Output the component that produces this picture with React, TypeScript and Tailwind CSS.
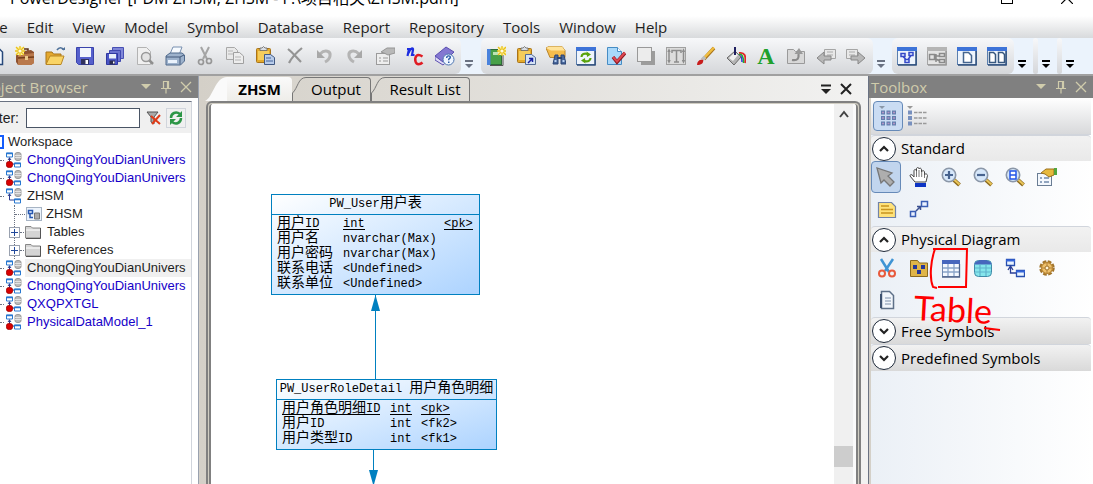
import { ReactNode } from 'react';
import clsx from 'clsx';

const menus = ['File', 'Edit', 'View', 'Model', 'Symbol', 'Database', 'Report', 'Repository', 'Tools', 'Window', 'Help'];

/* ICON PARTS */
const WindowFrame = ({ gray, children }: { gray?: boolean; children?: ReactNode }) => (
  <>
    <rect x="0.5" y="1.5" width="19" height="17" fill={gray ? '#e4e4e4' : '#eef4fc'} stroke={gray ? '#a5a5a5' : '#5b7fae'} />
    <rect x="0" y="1" width="20" height="4" fill={gray ? '#b5b5b5' : '#3d73d8'} />
    <path d="M19 5v14H1" fill="none" stroke={gray ? '#9a9a9a' : '#31507c'} strokeWidth="1.5" />
    {children}
  </>
);

const Star = ({ x, y }: { x: number; y: number }) => (
  <g transform={`translate(${x} ${y})`}>
    <rect x="-4" y="-4" width="8" height="8" fill="#fff3a0" />
    <path d="M0-5V5M-5 0H5M-4-4L4 4M4-4L-4 4" stroke="#e8c020" strokeWidth="1.3" />
    <circle r="1.6" fill="#fffbe0" />
  </g>
);

const Clipboard = () => (
  <>
    <rect x="1.5" y="2.5" width="14" height="14" rx="1" fill="#e5ab2c" stroke="#a8741a" />
    <path d="M3 5h11v9H3z" fill="#f5cd5c" />
    <path d="M5 4.5V2h2L8.500 .5 10 2h2v2.500z" fill="#d9dde3" stroke="#666" strokeWidth=".8" />
  </>
);

const Magnifier = ({ children }: { children: ReactNode }) => (
  <>
    <path d="M13 13l5.500 5" stroke="#8d6a1c" strokeWidth="4" />
    <path d="M13 12.500l5.500 5" stroke="#eac65a" strokeWidth="2" />
    <circle cx="8" cy="8" r="6.700" fill="#d6e7fa" stroke="#8b97a8" strokeWidth="1.600" />
    {children}
  </>
);

const icons: Record<string, ReactNode> = {
  New: <path d="M4 1.500h9l4.500 4.500v12.500H4z" fill="#f2f7ff" stroke="#27487a" strokeWidth="1.500" />,
  'New Project': (
    <>
      <path d="M7 5V3h6v2" fill="none" stroke="#5e3316" strokeWidth="1.500" />
      <path d="M1 6l15-2 3 2v11l-3 2H3l-2-3z" fill="#8f5230" />
      <path d="M3 9l16-2v10l-3 2H3z" fill="#b9794c" />
      <path d="M3 12l16-1" stroke="#733c18" strokeWidth="1.300" />
      <rect x="10" y="10" width="3" height="4" fill="#eac98c" />
      <Star x={5} y={5} />
    </>
  ),
  Open: (
    <>
      <path d="M1 18V6h6l1.500 2H16v3" fill="#e4a82e" stroke="#a87518" />
      <path d="M1 18.500L5 10h14l-3 8.500z" fill="#f9d466" stroke="#b98724" />
      <path d="M12 4c2-3 5-3 7 0" fill="none" stroke="#4f7199" strokeWidth="1.600" />
      <path d="M16.500 4h3.500V1z" fill="#4f7199" />
    </>
  ),
  Save: (
    <>
      <path d="M1.500 1.500h17v17h-15l-2-2z" fill="#5560cc" stroke="#3a43ac" />
      <rect x="5" y="2" width="11" height="9" fill="#f1f5fc" />
      <rect x="6" y="13" width="8" height="5.500" fill="#30325c" />
      <rect x="10.500" y="14" width="2.500" height="4" fill="#fff" />
    </>
  ),
  'Save All': (
    <>
      <path d="M7.500 1.500h11v11h-11z" fill="#8087d8" stroke="#4850b4" />
      <path d="M4.500 4.500h11v11h-11z" fill="#6a72d0" stroke="#4048b0" />
      <path d="M1.500 7.500h11v11h-11z" fill="#4a55c5" stroke="#3038a0" />
      <rect x="4" y="8" width="7" height="4.500" fill="#e8eefa" />
      <rect x="4.500" y="14.500" width="5.500" height="4" fill="#2a2c50" />
      <rect x="8" y="15.500" width="1.500" height="2" fill="#fff" />
    </>
  ),
  'Print Preview': (
    <>
      <path d="M2.500 1.500h9l4 4v13h-13z" fill="#f0f0f0" stroke="#b3b3b3" />
      <path d="M14 14l4 4" stroke="#8f8f8f" strokeWidth="2.500" />
      <circle cx="11" cy="11" r="4.500" fill="#e4e4e4" stroke="#999" strokeWidth="1.500" />
    </>
  ),
  Print: (
    <>
      <path d="M5 8l3-7h9l-3 8z" fill="#f7fbff" stroke="#7890b0" />
      <path d="M1 10l4-3h12l2.500 2v6l-4 4H1z" fill="#9db2cc" stroke="#506a8c" />
      <path d="M1 11h14l4-2M15 11v7.500" fill="none" stroke="#42597a" />
      <path d="M3 14h9v3H3z" fill="#eaf2fc" />
    </>
  ),
  Cut: (
    <>
      <path d="M6 1l6 12M14 1L8 13" stroke="#a4a4a4" strokeWidth="2" />
      <circle cx="6" cy="16" r="2.500" fill="none" stroke="#979797" strokeWidth="1.700" />
      <circle cx="14" cy="15" r="2.500" fill="none" stroke="#979797" strokeWidth="1.700" />
    </>
  ),
  Copy: (
    <>
      <path d="M1.500 1.500h8l3 3v9h-11z" fill="#e9e9e9" stroke="#a8a8a8" />
      <path d="M8.500 6.500h6l4 3.500v7.500h-10z" fill="#ededed" stroke="#a0a0a0" />
      <path d="M3 5h5M3 8h5M10 11h6M10 14h6" stroke="#b5b5b5" />
    </>
  ),
  Paste: (
    <>
      <Clipboard />
      <path d="M9.500 8.500h6l4 3v7h-10z" fill="#b8ccea" stroke="#415982" />
      <path d="M11 12h5M11 15h7" stroke="#47649a" />
    </>
  ),
  Delete: <path d="M3 3c5 4 8 8 13 13M17 2C12 6 7 11 4 17" fill="none" stroke="#949494" strokeWidth="2.200" />,
  Undo: (
    <>
      <path d="M5 8c5-5 11-3 10 2-.5 3-3 5-5 6" fill="none" stroke="#b4b4b4" strokeWidth="3" />
      <path d="M2 4v8h8z" fill="#a8a8a8" />
    </>
  ),
  Redo: (
    <>
      <path d="M14 8C9 3 3 5 4 10c.5 3 3 5 5 6" fill="none" stroke="#b4b4b4" strokeWidth="3" />
      <path d="M17 4v8H9z" fill="#a8a8a8" />
    </>
  ),
  Properties: (
    <>
      <rect x="1.500" y="7.500" width="13" height="11" fill="#eee" stroke="#9b9b9b" />
      <path d="M4 12h2m2 0h5M4 15h2m2 0h5" stroke="#999" />
      <path d="M6 6l6-4h8v5l-7 2-4-2z" fill="#b8b8b8" stroke="#959595" />
    </>
  ),
  Generate: (
    <>
      <path d="M2 3h2L2.500 10M3.500 7c2-5 5-6 4.500-3L7 9h2.500" fill="none" stroke="#1e2ee0" strokeWidth="2.200" />
      <path d="M17.500 10.500c-6-4-8 1-7 5 1 4 5 3 7 1" fill="none" stroke="#e01c24" strokeWidth="2.500" />
    </>
  ),
  Help: (
    <>
      <path d="M0 10L11 1l8 5-11 11z" fill="#8377d1" stroke="#5a4eb0" />
      <path d="M0 10v4l8 5 10-9-10 6z" fill="#ddd9f5" stroke="#5a4eb0" />
      <circle cx="13.500" cy="13.500" r="5.500" fill="#eef5ff" stroke="#4c75b0" />
      <path d="M11.700 12c0-3 4-2.500 3.600-.5-.2 1-1.700 1-1.700 2.700" fill="none" stroke="#2c5ca8" strokeWidth="1.400" />
      <rect x="13" y="15.500" width="1.500" height="1.500" fill="#2c5ca8" />
    </>
  ),
  'New Diagram': (
    <>
      <rect x="1.500" y="3.500" width="14" height="15" fill="#48a048" stroke="#2d6b38" />
      <rect x="1" y="3" width="3.500" height="16" fill="#4a82dc" />
      <rect x="7" y="6" width="6" height="3" fill="#bde3b4" />
      <path d="M17 6v13.500H4" fill="none" stroke="#555" />
      <Star x={16} y={5} />
    </>
  ),
  'Paste as Shortcut': (
    <>
      <Clipboard />
      <path d="M9.500 8.500h6l4 3v7h-10z" fill="#d5e2f5" stroke="#526b94" />
      <path d="M12 17l4-4m-3-.5h3.500V16" fill="none" stroke="#1820a0" strokeWidth="1.500" />
    </>
  ),
  Find: (
    <>
      <path d="M0 2l3-1.500h13l3 4v7H4z" fill="#f5bc4c" stroke="#b8842b" />
      <path d="M0 2l3-1.500h13l3 4H5z" fill="#ffe39a" />
      <path d="M9 9h3v9H7zM15 9h3l2 9h-5z" fill="#48679b" stroke="#2a4474" />
      <path d="M11 12h5" stroke="#2a4474" strokeWidth="2" />
      <path d="M8.500 15h2M16.500 15h2" stroke="#b8d0f0" strokeWidth="2" />
    </>
  ),
  Refresh: (
    <WindowFrame>
      <path d="M5.500 11c0-3 3-4 6-3M14.500 12c0 3-3 4-6 3" fill="none" stroke="#58a30c" strokeWidth="2.200" />
      <path d="M10.500 5.500L15 8.500l-4 2.500zM9.500 17.500L5 14.500 9 12z" fill="#58a30c" />
    </WindowFrame>
  ),
  'Check Model': (
    <>
      <path d="M1.500 1.500h10l4 4v13h-14z" fill="#a9d8fa" stroke="#468cc4" />
      <path d="M11.500 1.500v4h4" fill="#fff" stroke="#468cc4" />
      <path d="M7 11l4 5 8-9" fill="none" stroke="#8c1820" strokeWidth="3.500" />
      <path d="M7 11l4 4.500 8-9" fill="none" stroke="#dd4650" strokeWidth="2" />
    </>
  ),
  Shadow: (
    <>
      <path d="M5 5h14v14H5z" fill="#9c9c9c" />
      <rect x="1.500" y="1.500" width="14" height="14" fill="#ececec" stroke="#999" />
    </>
  ),
  'Text Format': (
    <>
      <rect x="0.500" y="1.500" width="19" height="17" fill="#dcdcdc" stroke="#a0a0a0" />
      <path d="M6 7V4.500h9V7M10.500 5v11M8 16h5M3 5v10M17.500 5v10M2 6l1-2 1 2M2 14l1 2 1-2M16.500 6l1-2 1 2M16.500 14l1 2 1-2" fill="none" stroke="#8c8c8c" strokeWidth="1.500" />
    </>
  ),
  'Line Style': (
    <>
      <path d="M18 2L8 13" stroke="#a8741c" strokeWidth="3.500" />
      <path d="M18 1.500L8 12" stroke="#f0bd40" strokeWidth="2.500" />
      <path d="M9 11L6 14" stroke="#bbb" strokeWidth="3.500" />
      <path d="M1 19c0-4 3-6 6-5 1 3-2 5-6 5z" fill="#c81c1c" />
    </>
  ),
  Fill: (
    <>
      <path d="M13 7c6-1 7 3 6 10" fill="none" stroke="#e02828" strokeWidth="1.800" />
      <path d="M13 8.500c3-1 4.500 2 4.500 8.500" fill="none" stroke="#20b030" strokeWidth="1.500" />
      <path d="M12 10c3-1 4 1 4 6" fill="none" stroke="#2838e0" strokeWidth="1.500" />
      <path d="M9 5l6 6-7 8-7-7z" fill="#b4b4b4" stroke="#6a6a6a" />
      <path d="M3 12l6-6 3 3-5 6z" fill="#efefef" />
      <path d="M9 1v8" stroke="#202060" strokeWidth="2" />
    </>
  ),
  'Up One Level': (
    <>
      <path d="M1.500 17.500v-14h6l2 2h9v12z" fill="#d8d8d8" stroke="#9a9a9a" />
      <path d="M6 14c6 1 7-2 6.500-6" fill="none" stroke="#8a8a8a" strokeWidth="2.200" />
      <path d="M8.500 8L13 2l4 6z" fill="#999" />
    </>
  ),
  Previous: (
    <>
      <path d="M8.500 3.500h11v9h-11z" fill="#e8e8e8" stroke="#a5a5a5" />
      <path d="M11 6h6M11 9h6" stroke="#aaa" />
      <path d="M1 12l7-6v4h7v4H8v4z" fill="#b8b8b8" stroke="#888" />
    </>
  ),
  Next: (
    <>
      <path d="M0.500 3.500h11v9h-11z" fill="#e8e8e8" stroke="#a5a5a5" />
      <path d="M3 6h6M3 9h6" stroke="#aaa" />
      <path d="M19 12l-7-6v4H5v4h7v4z" fill="#b8b8b8" stroke="#888" />
    </>
  ),
  'Physical Model': (
    <WindowFrame>
      <path d="M4 7.500h4v3H4zM12 6.500h4v3h-4zM8 13.500h4v3H8zM6 10.500l3 3M14 9.500l-3 4" fill="#e4ecff" stroke="#3448c8" strokeWidth="1.500" />
    </WindowFrame>
  ),
  'Auto Layout': (
    <WindowFrame gray>
      <path d="M2.500 8.500h5v5h-5zM12.500 7.500h5v3h-5zM12.500 13.500h5v3h-5zM7.500 10h5M7.500 12l5 3M9 8v8" fill="none" stroke="#8a8a8a" strokeWidth="1.500" />
    </WindowFrame>
  ),
  Page: (
    <WindowFrame>
      <path d="M6.500 6.500h5l3 3v7h-8z" fill="#fff" stroke="#45658f" strokeWidth="1.500" />
    </WindowFrame>
  ),
  'All Pages': (
    <WindowFrame>
      <path d="M2.500 6.500h4l2 2v8h-6zM11.500 6.500h4l2 2v8h-6z" fill="#fff" stroke="#38587f" strokeWidth="1.500" />
    </WindowFrame>
  ),

  /* TOOLBOX */
  'Large Icons': (
    <>
      <path d="M1 0h6L4 3z" fill="#8a97a8" />
      <path d="M3 6.500h15M3 12h15M3 17.500h15" stroke="#627fae" strokeWidth="4" strokeDasharray="4 1.500" />
      <path d="M4 6.500h13M4 12h13M4 17.500h13" stroke="#b393c4" strokeWidth="1.500" strokeDasharray="2 3.500" />
    </>
  ),
  'Small Icons': (
    <>
      <path d="M0 0h6L3 3z" fill="#999" />
      <path d="M1 6.500h4M1 12h4M1 17.500h4" stroke="#7890be" strokeWidth="4" />
      <path d="M7 6.500h13M7 12h13M7 17.500h13" stroke="#9a9a9a" strokeWidth="1.500" strokeDasharray="3.500 1" />
    </>
  ),
  Pointer: <path d="M1 1l4 15 3-3 6 6 4-4-6-6 4-3z" fill="#aeaeae" stroke="#777" strokeWidth="1.300" />,
  Grabber: (
    <>
      <path d="M6 15L1 9c0-2 2-2 4 1V4c0-2 2-2 2.500 0V2c0-2 2.500-2 2.500 0V2c.5-1.500 2.500-1 2.500 1v2c.5-2 3-1.500 3 0v3c.5-2 3-1 3 .5L17 15z" fill="#fff" stroke="#444" strokeWidth="1" />
      <path d="M7.500 4v6M10 3v7M12.700 4v6M15.500 6v5" stroke="#555" strokeWidth=".8" />
      <rect x="6" y="16" width="11" height="4" fill="#0d34c4" />
    </>
  ),
  'Zoom In': <Magnifier><path d="M4 8h8M8 4v8" stroke="#47638f" strokeWidth="2.200" /></Magnifier>,
  'Zoom Out': <Magnifier><path d="M4 8h8" stroke="#47638f" strokeWidth="2.200" /></Magnifier>,
  'Open Diagram': <Magnifier><path d="M5 4h6v8H5zM5 8h6" fill="#fff" stroke="#2455e8" strokeWidth="1.500" /></Magnifier>,
  'Object Properties': (
    <>
      <rect x="0.500" y="6.500" width="14" height="12" fill="#f4f8fd" stroke="#6a7d94" />
      <path d="M3 11h2m2 0h5M3 15h2m2 0h5" stroke="#7089aa" strokeWidth="1.500" />
      <path d="M4 6l5-4h8v6l-5 2-4-3z" fill="#e7b93c" stroke="#9b711d" />
      <path d="M17 1h3v7h-3z" fill="#52a63e" />
    </>
  ),
  Note: (
    <>
      <path d="M1.500 3.500h13l4 4v11h-17z" fill="#ffe27a" stroke="#7183a8" strokeWidth="1.200" />
      <path d="M4 7h8M4 10.500h12M4 14h12" stroke="#c9951f" strokeWidth="1.500" />
    </>
  ),
  Link: (
    <>
      <path d="M1.500 12.500h5v5h-5zM12.500 2.500h6v5h-6z" fill="#eaf1ff" stroke="#3a5eb4" strokeWidth="1.500" />
      <path d="M7 12l4-4M8 7.500h3.500V11" fill="none" stroke="#3a4f90" strokeWidth="1.500" />
    </>
  ),
  'Delete Symbol': (
    <>
      <path d="M4 1l8 13M16 1L8 13" stroke="#3f94d4" strokeWidth="2.500" />
      <circle cx="5" cy="15.500" r="3" fill="none" stroke="#e85a3c" strokeWidth="2" />
      <circle cx="15" cy="15.500" r="3" fill="none" stroke="#e85a3c" strokeWidth="2" />
    </>
  ),
  Package: (
    <>
      <path d="M1.500 18.500v-16h7l2 2.500h8v13.500z" fill="#e0b548" stroke="#8b6a20" />
      <path d="M4 7h4v4H4zM12 7h4v4h-4zM8 12h4v4H8z" fill="#26389a" />
    </>
  ),
  Table: (
    <>
      <rect x="1.500" y="2.500" width="17" height="16" fill="#f5f9ff" stroke="#7089b0" />
      <rect x="1" y="2" width="18" height="4" fill="#4767bd" />
      <path d="M7 6v12M13 6v12M2 10h16M2 14h16" stroke="#8aa5c9" strokeWidth="1.300" />
      <path d="M18.500 6v13H1" fill="none" stroke="#50648a" strokeWidth="1.300" />
    </>
  ),
  View: (
    <>
      <rect x="1.500" y="2.500" width="17" height="16" rx="4" fill="#85e6ec" stroke="#3f8ba8" />
      <path d="M1.500 6.500c0-6 17-6 17 0z" fill="#4767bd" />
      <path d="M7 6v12M13 6v12M2 10h16M2 14h16" stroke="#5fb4cc" strokeWidth="1.200" />
    </>
  ),
  Reference: (
    <>
      <path d="M1.500 1.500h8v6h-8zM11.500 12.500h8v6h-8z" fill="#eaf4ff" stroke="#284fae" strokeWidth="1.300" />
      <path d="M1 2.500h9M11 13.500h9" stroke="#3465da" strokeWidth="2" />
      <path d="M5.500 8v7H11M3 12l2.500-4L8 12" fill="none" stroke="#2a3f96" strokeWidth="1.300" />
    </>
  ),
  Procedure: (
    <>
      <circle cx="10" cy="10" r="6.500" fill="none" stroke="#a1742b" strokeWidth="2.500" strokeDasharray="3.600 1.500" />
      <circle cx="10" cy="10" r="5.500" fill="#efc16c" stroke="#b98736" strokeWidth="1.300" />
      <path d="M10 5v10M5 10h10" stroke="#b5833a" />
      <circle cx="10" cy="10" r="2" fill="#fff2d5" stroke="#a1742b" />
    </>
  ),
  File: (
    <>
      <path d="M4.500 1.500h8l4 4v13h-12z" fill="#f2f6fb" stroke="#5e7088" strokeWidth="1.500" />
      <rect x="3" y="4" width="2" height="14" fill="#3e5270" />
      <path d="M8 8h6M8 11h6M8 14h6" stroke="#7d90aa" />
    </>
  ),
};

const Icon = ({ name }: { name: string }) => (
  <svg viewBox="0 0 20 20" className="size-5 shrink-0" aria-hidden="true">
    {icons[name]}
  </svg>
);

const Overflow = ({ dark, wide }: { dark?: boolean; wide?: boolean }) => (
  <button aria-label="Toolbar options" className={clsx('flex h-full shrink-0 items-end pb-1 pl-1', wide ? 'w-5' : 'w-[19px]', dark ? 'text-black' : 'text-gray-500')}>
    <svg viewBox="0 0 8 8" className="mb-0.5 size-2" aria-hidden="true">
      <path d="M0 1h8" stroke="currentColor" strokeWidth="2" />
      <path d="M0 4h8L4 8z" fill="currentColor" />
    </svg>
  </button>
);

const ToolGroup = ({ names, className }: { names: string[]; className?: string }) => (
  <div className={clsx('flex h-full items-center rounded-md bg-linear-to-b from-[#f7f8fa] to-[#d5d7da]', className)}>
    {names.map((name) =>
      name === 'Font' ? (
        <button key={name} aria-label="Font colour" className="w-[30px] font-['Liberation_Serif',serif] text-2xl leading-5 font-bold text-[#20a02c]">
          A
        </button>
      ) : (
        <button key={name} aria-label={name} className="flex w-[30px] justify-center">
          <Icon name={name} />
        </button>
      )
    )}
  </div>
);

const PanelHeader = ({ title, className }: { title: string; className?: string }) => (
  <div className="flex h-[22px] shrink-0 items-center justify-between overflow-hidden bg-[#808080] text-[#d0ccac]">
    <h2 className={clsx('text-[15px] whitespace-nowrap', className)}>{title}</h2>
    <div className="flex items-center gap-2 pr-1.5">
      <button aria-label="Panel menu">
        <svg viewBox="0 0 12 12" className="size-3" aria-hidden="true"><path d="M1 3h10L6 8z" fill="currentColor" /></svg>
      </button>
      <button aria-label="Pin panel">
        <svg viewBox="0 0 12 14" className="h-3.5 w-3" fill="none" stroke="currentColor" strokeWidth="1.200" aria-hidden="true">
          <path d="M3.500 8V1.500h5V8M1 8.500h10M6 9v4.500M7.500 2v6" />
        </svg>
      </button>
      <button aria-label="Close panel">
        <svg viewBox="0 0 12 12" className="size-3" aria-hidden="true"><path d="M1 1l10 10M11 1L1 11" stroke="currentColor" strokeWidth="1.300" /></svg>
      </button>
    </div>
  </div>
);

/* TREE */
const ModelIcon = ({ dot }: { dot?: boolean }) => (
  <svg viewBox="0 0 16 16" className="size-4 shrink-0" aria-hidden="true">
    <path d="M9 2c0-2 6-2 6 0v5c0 2-6 2-6 0z" fill="#bcbcbc" stroke="#8a8a8a" strokeWidth=".8" />
    <path d="M9 3.500h6M9 5.500h6" stroke="#eee" strokeWidth=".8" />
    <path d="M.5 1h6v4h-6zM8.500 11h6v4h-6z" fill="#fff" stroke="#2878d0" />
    <path d="M0 1.500h7M8 11.500h7" stroke="#2878d0" strokeWidth="1.500" />
    <path d="M3.500 5.500V12H8M2 8l1.500-2L5 8" fill="none" stroke="#2c3c90" />
    {dot && <circle cx="3.500" cy="12.500" r="3.300" fill="#d80000" stroke="#900000" strokeWidth=".6" />}
  </svg>
);

const models = [
  { name: 'ChongQingYouDianUnivers', state: 'closed' },
  { name: 'ChongQingYouDianUnivers', state: 'closed' },
  { name: 'ZHSM', state: 'open' },
  { name: 'ChongQingYouDianUnivers', state: 'selected' },
  { name: 'ChongQingYouDianUnivers', state: 'closed' },
  { name: 'QXQPXTGL', state: 'closed' },
  { name: 'PhysicalDataModel_1', state: 'closed' },
];

const Folder = ({ name }: { name: string }) => (
  <li className="flex h-[18px] items-center">
    <button aria-label={`Expand ${name}`} className="-ml-1.5 flex size-[11px] shrink-0 items-center justify-center border border-gray-400 bg-white">
      <svg viewBox="0 0 7 7" className="size-[7px]" aria-hidden="true"><path d="M0 3.500h7M3.500 0v7" stroke="#234a9c" /></svg>
    </button>
    <span className="mr-px w-1 border-t border-dotted border-gray-500" />
    <svg viewBox="0 0 16 14" className="h-3.5 w-4 shrink-0" aria-hidden="true">
      <path d="M.5 13V1.500H6L7.500 3h8V13z" fill="#d4d4d4" stroke="#888" />
      <path d="M1 5h14" stroke="#fff" />
      <path d="M15.500 3v10.500H1" fill="none" stroke="#555" />
    </svg>
    <span className="ml-1.5">{name}</span>
  </li>
);

const ObjectBrowser = () => (
  <aside className="flex w-[199px] shrink-0 flex-col border-r border-gray-400 bg-white">
    <PanelHeader title="Object Browser" className="-ml-5" />
    <div className="mt-[3px] mr-1.5 flex min-h-0 flex-1 flex-col border-t border-r border-t-gray-500 border-r-gray-300 font-['Liberation_Sans',sans-serif] text-[13px]">
      <div className="flex h-[31px] shrink-0 items-center overflow-hidden bg-[#f0f0f0]">
        <label htmlFor="filter" className="-ml-4 w-[42px] shrink-0 text-sm">Filter:</label>
        <input id="filter" className="h-5 w-[114px] border border-gray-600 bg-white px-1" />
        <button aria-label="Clear filter" className="ml-1.5">
          <svg viewBox="0 0 16 16" className="size-4" aria-hidden="true">
            <path d="M1 2h11L8 7v7l-3-2V7z" fill="#aaa" stroke="#555" />
            <path d="M5 6l9 8M14 5l-8 9" stroke="#e03c18" strokeWidth="2" />
          </svg>
        </button>
        <button aria-label="Refresh tree" className="ml-1 flex size-5 items-center justify-center border border-gray-300">
          <svg viewBox="0 0 16 16" className="size-4" aria-hidden="true">
            <path d="M3 8c0-5 5-7 9-4M13 8c0 5-5 7-9 4" fill="none" stroke="#2c9646" strokeWidth="2.500" />
            <path d="M14 1v6H8zM2 15V9h6z" fill="#2c9646" />
          </svg>
        </button>
      </div>
      <ul className="flex-1 overflow-hidden">
        <li className="flex h-[18px] items-center">
          <span className="mr-1 h-3.5 w-1 border-2 border-l-0 border-blue-600 bg-white" />Workspace
        </li>
        {models.map((model, i) => (
          <li key={i}>
            <div className="flex h-[18px] items-center">
              <span className="mr-0.5 w-1 shrink-0 border-t border-dotted border-gray-500" />
              <ModelIcon dot={model.state !== 'open'} />
              <span
                className={clsx(
                  'ml-[3px] flex-1 overflow-hidden pl-0.5 leading-[18px]',
                  model.state === 'closed' && 'text-[#1600c8]',
                  model.state === 'selected' && 'bg-[#f0f0f0]'
                )}
              >
                {model.name}
              </span>
            </div>
            {model.state === 'open' && (
              <ul className="ml-3.5 border-l border-dotted border-gray-500">
                <li className="flex h-[18px] items-center">
                  <span className="mr-px w-2.5 border-t border-dotted border-gray-500" />
                  <svg viewBox="0 0 16 14" className="h-3.5 w-4 shrink-0" aria-hidden="true">
                    <rect x=".5" y=".5" width="15" height="13" fill="#edf4fc" stroke="#a7b4c4" />
                    <path d="M2.500 3.500h4v3h-4zM4 7v3.500h3" fill="none" stroke="#2858b0" strokeWidth="1.500" />
                    <path d="M8.500 6h5v6h-5z" fill="#aaa" stroke="#777" />
                  </svg>
                  <span className="ml-1">ZHSM</span>
                </li>
                <Folder name="Tables" />
                <Folder name="References" />
              </ul>
            )}
          </li>
        ))}
      </ul>
    </div>
  </aside>
);

/* DIAGRAM */
const Label = ({ children, underline }: { children: string; underline?: boolean }) => (
  <span className={clsx('inline-block h-3.5 whitespace-pre', underline && 'border-b border-black')}>
    {children.split(/([\u4e00-\u9fff]+)/).map((part, i) => (
      <span key={i} className={i % 2 ? 'text-sm leading-3.5' : 'text-xs leading-3.5'}>{part}</span>
    ))}
  </span>
);

type EntityProps = { title: string; rows: string[][]; className: string; columns: string };

const Entity = ({ title, rows, className, columns }: EntityProps) => (
  <table className={clsx("absolute block border border-[#0080c0] bg-linear-to-br from-white to-[#acd3ff] font-['Liberation_Mono','Noto_Sans_CJK_SC',monospace] text-xs text-black", className)}>
    <caption className="block h-5 border-b border-[#0080c0] text-center leading-[18px]">
      <Label>{title}</Label>
    </caption>
    <tbody className="block px-[5px] pt-px">
      {rows.map((row, i) => (
        <tr key={i} className={clsx('grid h-[15px]', columns)}>
          {row.map((cell, j) => (
            <td key={j} className="flex p-0"><Label underline={i === 0}>{cell}</Label></td>
          ))}
        </tr>
      ))}
    </tbody>
  </table>
);

const Diagram = () => (
  <div className="relative min-w-0 flex-1 overflow-hidden bg-white">
    <Entity
      title="PW_User用户表"
      className="top-[90px] left-[60px] h-[101px] w-[209px]"
      columns="grid-cols-[66px_101px_1fr]"
      rows={[
        ['用户ID', 'int', '<pk>'],
        ['用户名', 'nvarchar(Max)'],
        ['用户密码', 'nvarchar(Max)'],
        ['联系电话', '<Undefined>'],
        ['联系单位', '<Undefined>'],
      ]}
    />
    <svg viewBox="0 0 9 84" className="absolute top-[191px] left-[160px] h-[84px] w-[9px]" aria-hidden="true">
      <path d="M4.500 0v84" stroke="#0080c0" />
      <path d="M4.500 0L9 16H0z" fill="#0080c0" />
    </svg>
    <Entity
      title="PW_UserRoleDetail 用户角色明细"
      className="top-[275px] left-[65px] h-[71px] w-[221px]"
      columns="grid-cols-[108px_31px_1fr]"
      rows={[
        ['用户角色明细ID', 'int', '<pk>'],
        ['用户ID', 'int', '<fk2>'],
        ['用户类型ID', 'int', '<fk1>'],
      ]}
    />
    <svg viewBox="0 0 9 36" className="absolute top-[346px] left-[158px] h-9 w-[9px]" aria-hidden="true">
      <path d="M4.500 0v36" stroke="#0080c0" />
      <path d="M0 20h9L4.500 36z" fill="#0080c0" />
    </svg>
  </div>
);

const TabEdge = ({ active }: { active?: boolean }) =>
  active ? (
    <svg viewBox="0 0 22 24" className="h-full w-[22px] shrink-0" aria-hidden="true">
      <path d="M0 24C8 21 10 0 22 0V24z" fill="#fafafa" />
    </svg>
  ) : (
    <svg viewBox="0 0 16 24" className="h-full w-4 shrink-0" aria-hidden="true">
      <path d="M.5 24V16C6 11 6 .5 14 .5H16" fill="none" stroke="#777" />
    </svg>
  );

const Workarea = () => (
  <main className="flex min-w-0 flex-1 flex-col bg-linear-to-r from-[#d4d0c8] to-[#f2f2f1]">
    <div role="tablist" className="ml-1.5 flex h-[25px] shrink-0 items-stretch pt-px text-[15px] text-black">
      <button role="tab" aria-selected="true" className="flex w-[87px] items-center font-bold">
        <TabEdge active />
        <span className="flex h-full flex-1 items-center justify-center rounded-tr-sm bg-linear-to-b from-[#fafafa] to-[#eeede9]">ZHSM</span>
      </button>
      <button role="tab" className="flex w-[79px] items-center">
        <TabEdge />
        <span className="flex h-full flex-1 items-center justify-center rounded-tr-sm border-t border-r border-[#777] pr-1.5">Output</span>
      </button>
      <button role="tab" className="flex w-[99px] items-center whitespace-nowrap">
        <TabEdge />
        <span className="flex h-full flex-1 items-center justify-center rounded-tr-sm border-t border-r border-[#777] pr-1.5">Result List</span>
      </button>
      <div className="ml-auto flex items-center gap-2 pr-4">
        <button aria-label="Window list">
          <svg viewBox="0 0 12 10" className="h-2.5 w-3" aria-hidden="true"><path d="M1 1.500h10" stroke="#222" strokeWidth="2" /><path d="M1 5h10L6 10z" fill="#222" /></svg>
        </button>
        <button aria-label="Close diagram">
          <svg viewBox="0 0 12 12" className="size-3" aria-hidden="true"><path d="M1 1l10 10M11 1L1 11" stroke="#222" strokeWidth="2" /></svg>
        </button>
      </div>
    </div>
    <div className="mr-[7px] ml-[7px] flex min-h-0 flex-1 rounded-t-md border-2 border-b-0 border-[#808080] bg-[#d0cdc2] px-px pt-px">
      <div className="flex min-w-0 flex-1 overflow-hidden rounded-t-sm border-x-2 border-[#808080] bg-white">
        <Diagram />
        <div className="flex w-[19px] shrink-0 flex-col items-center bg-[#f0f0f0]">
          <button aria-label="Scroll up" className="mt-1.5">
            <svg viewBox="0 0 10 8" className="h-2 w-2.5" aria-hidden="true"><path d="M1 7l4-5 4 5" fill="none" stroke="#444" strokeWidth="2" /></svg>
          </button>
          <div className="mt-auto mb-[17px] h-[21px] w-full bg-[#cdcdcd]" />
        </div>
        <div className="w-[3px] bg-[#fafafa]" />
      </div>
    </div>
  </main>
);

/* TOOLBOX */
const Section = ({ title, open, children }: { title: string; open?: boolean; children?: ReactNode }) => (
  <section className="relative">
    <button aria-expanded={!!open} className={clsx('flex w-full items-center gap-[5px] rounded-t-sm border-t border-gray-300 bg-linear-to-b from-[#f2f2f2] pl-px text-left text-[15px] text-black', open ? 'h-[26px] to-[#e9e9e9]' : 'h-[27px] to-[#d9d9d9]')}>
      <span className="flex size-6 shrink-0 items-center justify-center rounded-full border border-gray-800 bg-white">
        <svg viewBox="0 0 10 8" className={clsx('h-2 w-2.5', !open && 'rotate-180')} aria-hidden="true"><path d="M1 6l4-4 4 4" fill="none" stroke="#222" strokeWidth="2.200" /></svg>
      </span>
      {title}
    </button>
    {children}
  </section>
);

const ToolGrid = ({ names }: { names: string[] }) => (
  <div className="grid grid-cols-[repeat(6,32px)] pb-px">
    {names.map((name) => (
      <button
        key={name}
        aria-label={name}
        className={clsx('flex h-8 items-center justify-center border', name === 'Pointer' ? 'mr-0.5 rounded-sm border-[#668ab8] bg-[#c1d5ee]' : 'border-transparent')}
      >
        <Icon name={name} />
      </button>
    ))}
  </div>
);

const Toolbox = () => (
  <aside className="flex w-[225px] shrink-0 flex-col border-l border-gray-500 bg-[#d4d0c8]">
    <PanelHeader title="Toolbox" className="ml-0.5" />
    <div className="ml-0.5 flex-1 bg-linear-to-r from-[#ebf0f6] to-white pr-0.5">
      <div className="flex h-[37px] items-center gap-1 border-b border-gray-300 bg-linear-to-b from-white to-[#d8d9db] pl-0.5">
        <button aria-label="Large Icons" className="flex size-[30px] items-center justify-center rounded-sm border border-[#668ab8] bg-[#cadcf3]">
          <Icon name="Large Icons" />
        </button>
        <button aria-label="Small Icons" className="flex h-[30px] items-center justify-center">
          <Icon name="Small Icons" />
        </button>
      </div>
      <Section title="Standard" open>
        <ToolGrid names={['Pointer', 'Grabber', 'Zoom In', 'Zoom Out', 'Open Diagram', 'Object Properties', 'Note', 'Link']} />
      </Section>
      <Section title="Physical Diagram" open>
        <ToolGrid names={['Delete Symbol', 'Package', 'Table', 'View', 'Reference', 'Procedure', 'File']} />
        {/* red pen marks over the Table tool */}
        <svg viewBox="0 0 140 110" className="pointer-events-none absolute top-0 left-0 z-10 h-[110px] w-[140px]" fill="none" stroke="#ff0000" strokeWidth="2" aria-hidden="true">
          <path d="M62 23H96L95 61H67M64 23c-4 11-6 28-2 38l4 1" />
          <path d="M113 102l16 2" />
        </svg>
        <span className="pointer-events-none absolute top-[67px] left-[43px] z-10 rotate-3 font-['Lato',sans-serif] text-[34px] leading-8 text-[#ff0000]">Table</span>
      </Section>
      <Section title="Free Symbols" />
      <Section title="Predefined Symbols" />
    </div>
  </aside>
);

export default function App() {
  return (
    <div className="flex h-screen flex-col overflow-hidden bg-white font-['Open_Sans','Noto_Sans_CJK_SC',sans-serif] text-[#1e1e1e]">
      {/* TITLE BAR */}
      <header className="flex h-4 shrink-0 items-start justify-between overflow-hidden text-black">
        <h1 className="-mt-3.5 ml-2.5 text-base leading-6 whitespace-nowrap">PowerDesigner [PDM ZHSM, ZHSM - F:\项目相关\ZHSM.pdm]</h1>
        <div className="-mt-2 mr-5 flex gap-12">
          <button aria-label="Maximize" className="size-3 border border-black" />
          <button aria-label="Close">
            <svg viewBox="0 0 12 12" className="size-3" aria-hidden="true"><path d="M0 0l12 12M12 0L0 12" stroke="#000" strokeWidth="1.200" /></svg>
          </button>
        </div>
      </header>

      {/* MENU */}
      <nav className="-ml-4 flex h-[22px] shrink-0 items-center gap-[19px] bg-linear-to-b from-white to-[#d8dadc] text-[15px]">
        {menus.map((menu) => (
          <button key={menu}>{menu}</button>
        ))}
      </nav>

      {/* TOOLBAR */}
      <div className="flex h-9 shrink-0 items-center overflow-hidden bg-[#ebf3fc]">
        <ToolGroup className="-ml-5 w-[481px] shrink-0" names={['New', 'New Project', 'Open', 'Save', 'Save All', 'Print Preview', 'Print', 'Cut', 'Copy', 'Paste', 'Delete', 'Undo', 'Redo', 'Properties', 'Generate', 'Help']} />
        <Overflow wide />
        <ToolGroup className="w-[392px] shrink-0" names={['New Diagram', 'Paste as Shortcut', 'Find', 'Refresh', 'Check Model', 'Shadow', 'Text Format', 'Line Style', 'Fill', 'Font', 'Up One Level', 'Previous', 'Next']} />
        <Overflow />
        <ToolGroup className="w-[122px] shrink-0" names={['Physical Model', 'Auto Layout', 'Page', 'All Pages']} />
        <Overflow dark />
        <ToolGroup className="w-[5px] shrink-0" names={[]} />
        <Overflow dark />
        <ToolGroup className="w-[5px] shrink-0" names={[]} />
        <Overflow dark />
      </div>

      <div className="flex min-h-0 flex-1 border-t-2 border-[#a0a0a0]">
        <ObjectBrowser />
        <Workarea />
        <Toolbox />
      </div>
    </div>
  );
}
